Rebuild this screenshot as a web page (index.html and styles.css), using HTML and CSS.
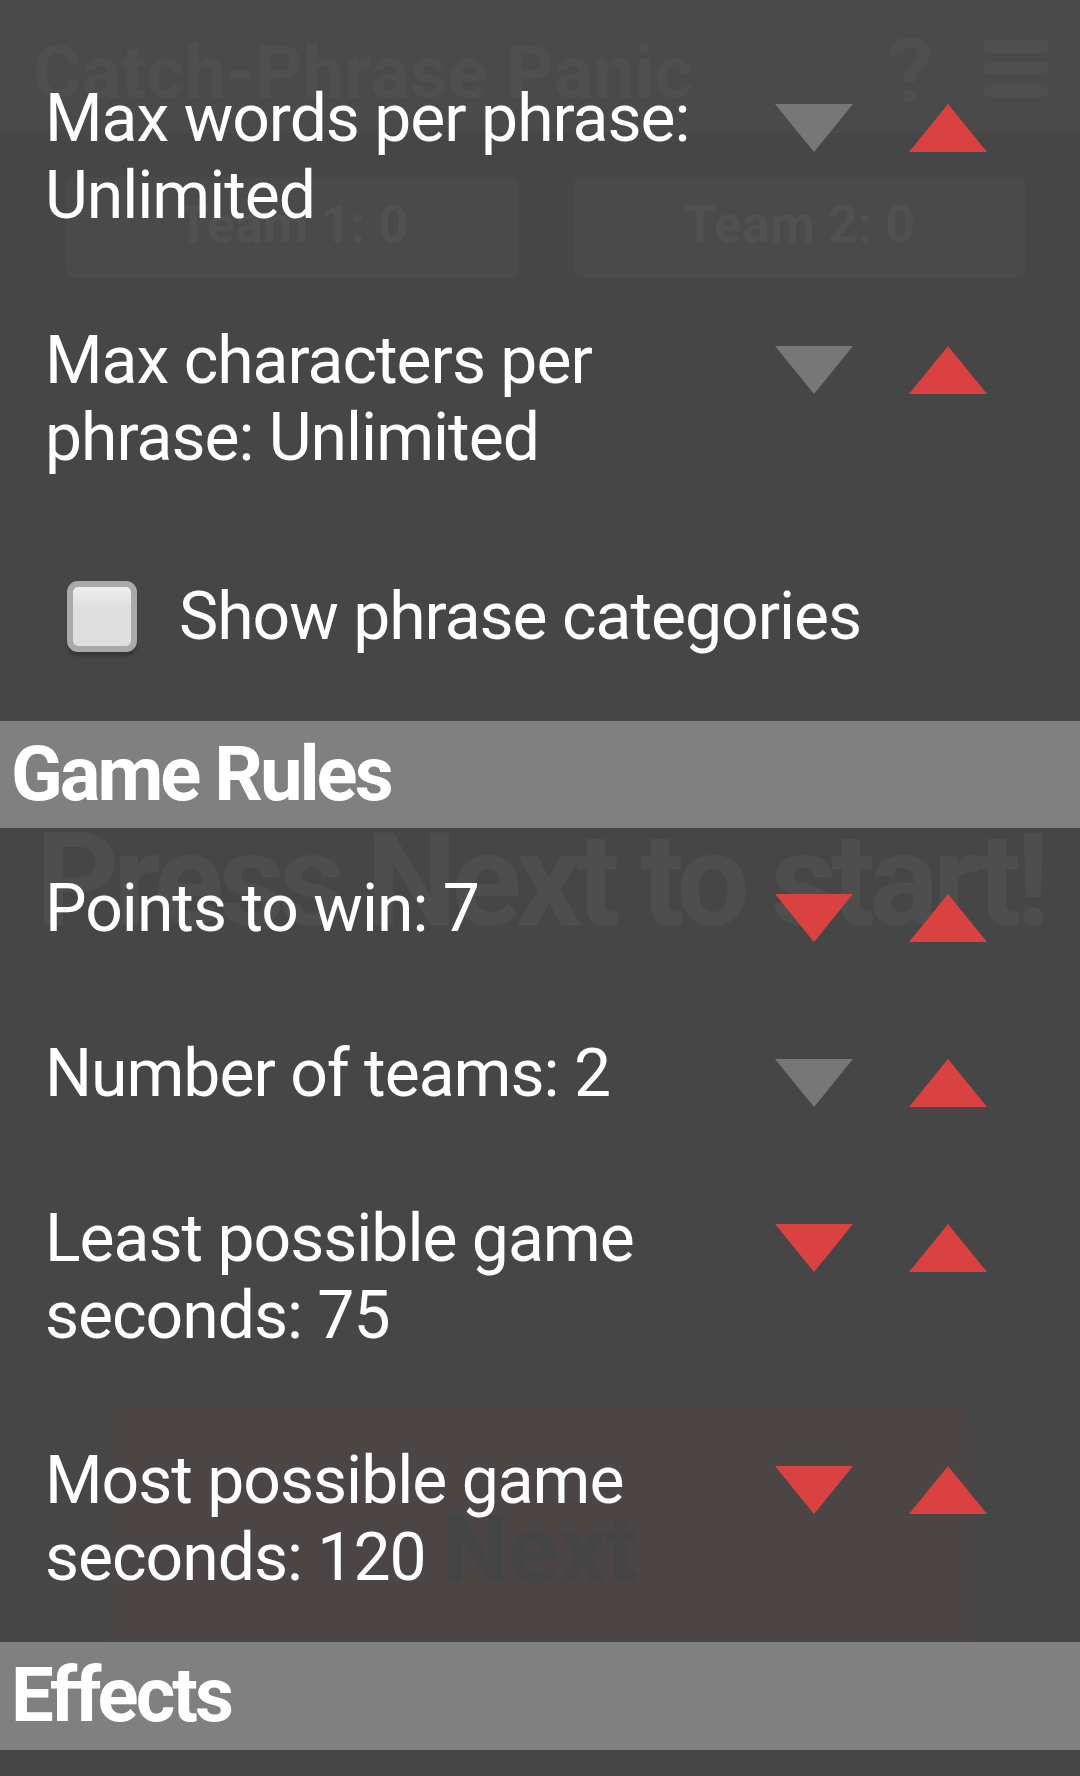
FILE: index.html
```html
<!DOCTYPE html>
<html lang="en">
<head>
<meta charset="utf-8">
<title>Catch-Phrase Panic – Settings</title>
<link rel="stylesheet" href="styles.css">
</head>
<body>
<div class="game">
  <header class="game-header">
    <h1 class="game-title">Catch-Phrase Panic</h1>
    <span class="help">?</span>
    <svg class="menu" width="66" height="58" viewBox="0 0 66 58">
      <rect x="0" y="0" width="66" height="13" rx="6.5"/>
      <rect x="0" y="22" width="66" height="13" rx="6.5"/>
      <rect x="0" y="44" width="66" height="13" rx="6.5"/>
    </svg>
  </header>
  <div class="teams">
    <div class="team">Team 1: 0</div>
    <div class="team">Team 2: 0</div>
  </div>
  <div class="prompt">Press Next to start!</div>
  <div class="next-btn">Next</div>
</div>

<div class="settings">
  <div class="row">
    <div class="label">Max words per phrase:<br>Unlimited</div>
    <div class="steppers"><span class="tri down off"></span><span class="tri up"></span></div>
  </div>
  <div class="row">
    <div class="label">Max characters per<br>phrase: Unlimited</div>
    <div class="steppers"><span class="tri down off"></span><span class="tri up"></span></div>
  </div>
  <div class="check-row">
    <span class="checkbox"></span>
    <span class="label">Show phrase categories</span>
  </div>
  <div class="band">Game Rules</div>
  <div class="row">
    <div class="label">Points to win: 7</div>
    <div class="steppers"><span class="tri down"></span><span class="tri up"></span></div>
  </div>
  <div class="row">
    <div class="label">Number of teams: 2</div>
    <div class="steppers"><span class="tri down off"></span><span class="tri up"></span></div>
  </div>
  <div class="row">
    <div class="label">Least possible game<br>seconds: 75</div>
    <div class="steppers"><span class="tri down"></span><span class="tri up"></span></div>
  </div>
  <div class="row">
    <div class="label">Most possible game<br>seconds: 120</div>
    <div class="steppers"><span class="tri down"></span><span class="tri up"></span></div>
  </div>
  <div class="band band-last">Effects</div>
</div>
</body>
</html>
```
FILE: styles.css
```css
html, body {
  margin: 0;
  padding: 0;
}
body {
  width: 1080px;
  height: 1776px;
  overflow: hidden;
  position: relative;
  background: #464646;
  font-family: Roboto, "Noto Sans", sans-serif;
}

/* ---------- game screen underneath ---------- */
.game {
  color: #4f4f4f;
}
.game-header {
  display: flex;
  align-items: flex-start;
  height: 133px;
  background: #4a4a4a;
  padding: 0 31px 0 33px;
  box-sizing: border-box;
}
.game-title {
  flex: 1;
  margin: 29px 0 0;
  font-size: 74px;
  line-height: 87px;
  font-weight: 700;
  color: #4f4f4f;
}
.help {
  margin-top: 27px;
  font-size: 90px;
  line-height: 90px;
  font-weight: 700;
  color: #4f4f4f;
}
.menu {
  margin: 40px 0 0 50px;
  fill: #4f4f4f;
}
.teams {
  display: flex;
  gap: 54px;
  padding: 44px 54px 0 66px;
}
.team {
  flex: 1;
  height: 101px;
  line-height: 95px;
  border-radius: 8px;
  background: #4a4a4a;
  text-align: center;
  font-size: 52px;
  font-weight: 700;
  color: #515151;
}
.prompt {
  margin-top: 538px;
  text-align: center;
  font-size: 130px;
  line-height: 130px;
  font-weight: 700;
  letter-spacing: -6px;
  color: #4e4e4e;
}
.next-btn {
  margin: 461px 0 0 109px;
  width: 862px;
  height: 260px;
  box-sizing: border-box;
  padding-top: 96px;
  border-radius: 8px;
  background: #4b4546;
  text-align: center;
  font-size: 94px;
  line-height: 94px;
  font-weight: 700;
  color: #454444;
}

/* ---------- settings overlay ---------- */
.settings {
  position: absolute;
  top: 0;
  left: 0;
  right: 0;
  bottom: 0;
  padding-top: 38px;
  color: #ffffff;
}
.row {
  display: flex;
  align-items: flex-start;
  padding: 42px 93px 46px 45px;
}
.label {
  flex: 1;
  font-size: 66px;
  line-height: 77px;
  letter-spacing: -1px;
}
.steppers {
  display: flex;
  gap: 56px;
  margin-top: 24px;
}
.tri {
  display: block;
  width: 0;
  height: 0;
  border-left: 39.5px solid transparent;
  border-right: 39.5px solid transparent;
}
.tri.down {
  border-top: 48px solid #da4242;
}
.tri.up {
  border-bottom: 48px solid #da4242;
}
.tri.down.off {
  border-top-color: #777777;
}
.check-row {
  display: flex;
  align-items: center;
  gap: 42px;
  padding: 56px 0 66px 67px;
}
.check-row .label {
  flex: none;
}
.checkbox {
  display: block;
  width: 70px;
  height: 71px;
  box-sizing: border-box;
  border: 6px solid #a9a9a9;
  border-radius: 11px;
  background: linear-gradient(#efefef, #dedede 35%, #dedede);
  box-shadow: 0 4px 3px rgba(0, 0, 0, 0.22);
}
.band {
  height: 107px;
  line-height: 107px;
  padding-left: 11px;
  background: #808080;
  font-size: 76px;
  font-weight: 700;
  letter-spacing: -3px;
}
.band-last {
  height: 108px;
}
```
